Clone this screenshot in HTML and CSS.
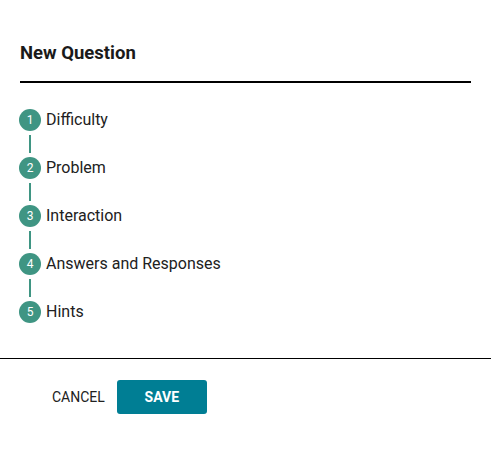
FILE: index.html
```html
<!DOCTYPE html>
<html>
<head>
<meta charset="utf-8">
<link rel="stylesheet" href="styles.css">
</head>
<body>
<div class="dialog">
  <div class="header">
    <h2 class="title">New Question</h2>
  </div>
  <ol class="steps">
    <li class="step"><span class="num">1</span><span class="label">Difficulty</span></li>
    <li class="connector"></li>
    <li class="step"><span class="num">2</span><span class="label">Problem</span></li>
    <li class="connector"></li>
    <li class="step"><span class="num">3</span><span class="label">Interaction</span></li>
    <li class="connector"></li>
    <li class="step"><span class="num">4</span><span class="label">Answers and Responses</span></li>
    <li class="connector"></li>
    <li class="step"><span class="num">5</span><span class="label">Hints</span></li>
  </ol>
  <div class="footer">
    <button class="btn cancel">Cancel</button>
    <button class="btn save">Save</button>
  </div>
</div>
</body>
</html>
```
FILE: styles.css
```css
html, body {
  margin: 0;
  padding: 0;
  background: #fff;
}
body {
  font-family: Roboto, "Liberation Sans", sans-serif;
  color: #212121;
}
.dialog {
  width: 491px;
}
.header {
  margin: 0 20px;
  padding-top: 42px;
  border-bottom: 2px solid #000;
  height: 39px;
}
.title {
  margin: 0;
  font-size: 18.5px;
  font-weight: 700;
  line-height: 22px;
  color: #1a1a1a;
}
.steps {
  list-style: none;
  margin: 0;
  padding: 26px 20px 35px 19px;
  border-bottom: 1px solid #000;
}
.step {
  display: flex;
  align-items: center;
  height: 22px;
}
.num {
  width: 22px;
  height: 22px;
  border-radius: 50%;
  background: #3f9583;
  color: #fff;
  font-size: 12px;
  display: flex;
  align-items: center;
  justify-content: center;
  flex: none;
}
.label {
  margin-left: 5px;
  font-size: 16px;
  line-height: 20px;
  margin-top: -1px;
  color: #212121;
}
.connector {
  width: 2px;
  height: 18px;
  background: #3f9583;
  margin: 4px 0 4px 10px;
}
.footer {
  display: flex;
  align-items: center;
  padding: 21px 0 0 45px;
}
.btn {
  font-family: Roboto, "Liberation Sans", sans-serif;
  font-size: 14px;
  text-transform: uppercase;
  border: none;
  cursor: pointer;
}
.cancel {
  background: none;
  color: #212121;
  padding: 0 7px;
  height: 34px;
  margin-right: 5px;
}
.save {
  background: #007e94;
  color: #fff;
  font-weight: 700;
  width: 90px;
  height: 34px;
  border-radius: 3px;
}
```
